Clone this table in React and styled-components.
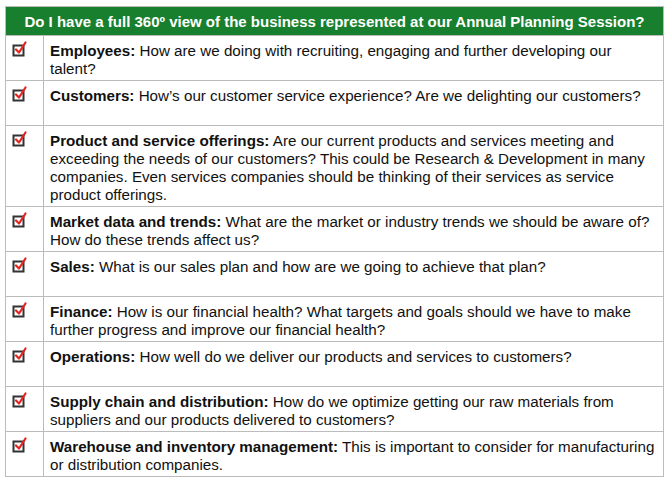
import React from "react";
import styled, { createGlobalStyle } from "styled-components";

const GlobalStyle = createGlobalStyle`
  body {
    margin: 0;
    background: #ffffff;
    font-family: "Liberation Sans", Arial, sans-serif;
  }
`;

const Page = styled.div`
  padding: 6px 5px;
`;

const Table = styled.table`
  width: 659px;
  table-layout: fixed;
  border-collapse: collapse;
  border: 1px solid #bcbcbc;
  font-size: 15.2px;
  color: #111;
`;

const IconCol = styled.col`
  width: 38px;
`;

const HeadCell = styled.th`
  background: #177f2d;
  color: #ffffff;
  font-weight: bold;
  font-size: 15px;
  height: 28px;
  padding: 0;
  text-align: center;
  vertical-align: middle;
`;

const Row = styled.tr`
  border-top: 1px solid #bcbcbc;
`;

const IconCell = styled.td`
  padding: 4px 0 0 5px;
  vertical-align: top;
  border-right: 1px solid #bcbcbc;
`;

const TextCell = styled.td`
  box-sizing: border-box;
  padding: 5.5px 2px 2px 6px;
  line-height: 18px;
  height: ${(p) => (p.$lines || 2) * 18 + 9}px;
  vertical-align: top;
`;

const Label = styled.b`
  font-weight: bold;
`;

const Check = () => (
  <svg width="18" height="18" viewBox="0 0 18 18" style={{ display: "block" }}>
    <rect x="2.5" y="5.5" width="10" height="10" fill="#fff" stroke="#333" strokeWidth="2" />
    <path d="M5 9.5 L8 12.5 L14.5 2.5" fill="none" stroke="#e8221f" strokeWidth="2.2" strokeLinecap="round" strokeLinejoin="round" />
  </svg>
);

const items = [
  ["Employees:", "How are we doing with recruiting, engaging and further developing our talent?"],
  ["Customers:", "How’s our customer service experience? Are we delighting our customers?"],
  [
    "Product and service offerings:",
    "Are our current products and services meeting and exceeding the needs of our customers? This could be Research & Development in many companies. Even services companies should be thinking of their services as service product offerings.",
    4,
  ],
  ["Market data and trends:", "What are the market or industry trends we should be aware of? How do these trends affect us?"],
  ["Sales:", "What is our sales plan and how are we going to achieve that plan?"],
  ["Finance:", "How is our financial health? What targets and goals should we have to make further progress and improve our financial health?"],
  ["Operations:", "How well do we deliver our products and services to customers?"],
  ["Supply chain and distribution:", "How do we optimize getting our raw materials from suppliers and our products delivered to customers?"],
  ["Warehouse and inventory management:", "This is important to consider for manufacturing or distribution companies."],
];

export default function App() {
  return (
    <Page>
      <GlobalStyle />
      <Table>
        <colgroup>
          <IconCol />
          <col />
        </colgroup>
        <thead>
          <tr>
            <HeadCell colSpan={2}>
              Do I have a full 360º view of the business represented at our Annual Planning Session?
            </HeadCell>
          </tr>
        </thead>
        <tbody>
          {items.map(([label, text, lines]) => (
            <Row key={label}>
              <IconCell>
                <Check />
              </IconCell>
              <TextCell $lines={lines}>
                <Label>{label}</Label> {text}
              </TextCell>
            </Row>
          ))}
        </tbody>
      </Table>
    </Page>
  );
}
